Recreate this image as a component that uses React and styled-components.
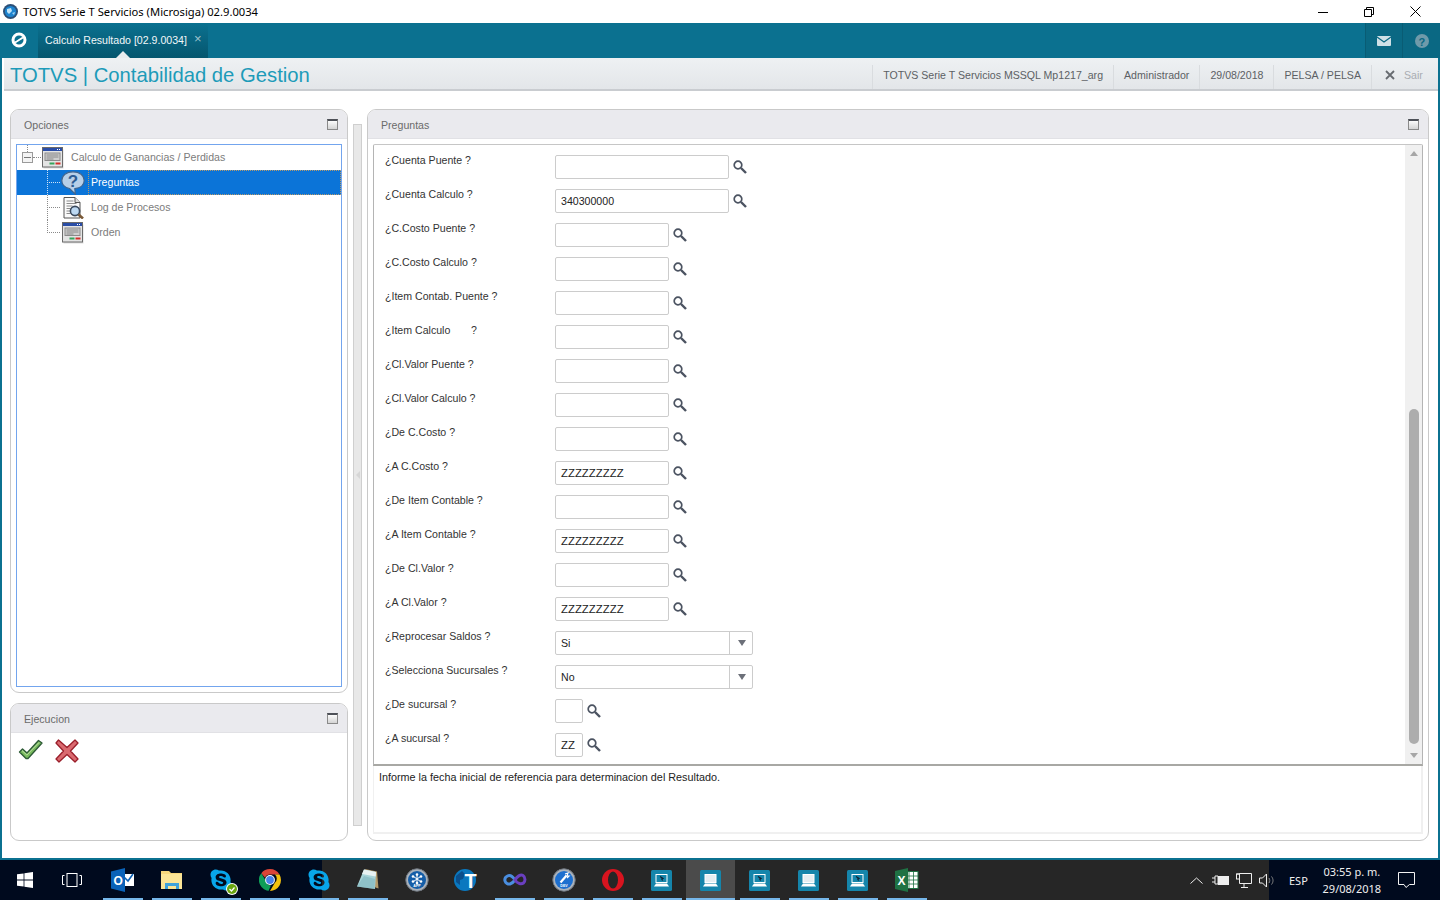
import React from "react";
import styled, { createGlobalStyle } from "styled-components";
import { FaSkype } from "react-icons/fa";

const GlobalStyle = createGlobalStyle`
  html, body {
    margin: 0;
    padding: 0;
    height: 100%;
    background: #fff;
    overflow: hidden;
  }
  * { box-sizing: border-box; }
`;

const Page = styled.div`
  width: 1440px;
  height: 900px;
  display: flex;
  flex-direction: column;
  font-family: "Liberation Sans", Arial, sans-serif;
`;

const TitleBar = styled.div`
  height: 23px;
  display: flex;
  align-items: center;
  background: #fff;
  padding: 0 2px 0 3px;
  flex: none;
`;

const TitleText = styled.span`
  font-family: "Noto Sans", sans-serif;
  font-size: 11.2px;
  color: #000;
  margin-left: 5px;
  flex: 1;
`;

const WindowButton = styled.div`
  width: 46px;
  height: 23px;
  display: flex;
  align-items: center;
  justify-content: center;
`;

const TealBar = styled.div`
  height: 35px;
  flex: none;
  display: flex;
  background: #0b7190;
`;

const LogoSlot = styled.div`
  width: 38px;
  display: flex;
  align-items: center;
  justify-content: center;
  padding-bottom: 1px;
`;

const Tab = styled.div`
  position: relative;
  width: 170px;
  display: flex;
  align-items: center;
  padding: 0 0 1px 7px;
  color: #f2f7f9;
  font-size: 10.6px;
  background: linear-gradient(#0b7190, #05566e);
  &::after {
    content: "";
    position: absolute;
    left: 78px;
    bottom: 0;
    border-left: 7px solid transparent;
    border-right: 7px solid transparent;
    border-bottom: 7px solid #e9ecee;
  }
`;

const TabClose = styled.span`
  margin-left: 7px;
  color: #9fc3cf;
  font-size: 13px;
  line-height: 10px;
  padding-bottom: 2px;
`;

const BarSpacer = styled.div`
  flex: 1;
`;

const BarSlot = styled.div`
  width: ${(p) => p.$w}px;
  display: flex;
  align-items: center;
  justify-content: center;
  background: #0a6883;
  border-left: 1px solid #095c74;
`;

const AppFrame = styled.div`
  flex: 1;
  display: flex;
  flex-direction: column;
  border-left: 2px solid #0b7190;
  border-right: 2px solid #0b7190;
  border-bottom: 2px solid #0b7190;
  min-height: 0;
`;

const HeaderBar = styled.div`
  height: 33px;
  flex: none;
  margin-left: 2px;
  display: flex;
  align-items: flex-end;
  background: linear-gradient(#eef1f3, #e3e6e9);
  border-bottom: 2px solid #c9ccd0;
`;

const AppTitle = styled.div`
  flex: 1;
  align-self: center;
  padding: 4px 0 0 6px;
  font-size: 20.25px;
  color: #1d9bb9;
  white-space: pre;
`;

const HeaderItem = styled.div`
  height: 24px;
  padding: 0 10px 4px;
  display: flex;
  align-items: center;
  font-size: 10.6px;
  color: #5c5f64;
  border-left: 1px solid #d9dcdf;
  white-space: nowrap;
`;

const ExitItem = styled(HeaderItem)`
  width: 67px;
  gap: 9px;
  padding: 0 0 4px 13px;
  color: #a9adb2;
`;

const Content = styled.div`
  flex: 1;
  min-height: 0;
  display: flex;
  padding: 18px 9px 17px 8px;
  background: #fff;
`;

const LeftColumn = styled.div`
  width: 338px;
  flex: none;
  display: flex;
  flex-direction: column;
  gap: 10px;
`;

const Splitter = styled.div`
  width: 9px;
  margin: 15px 5px;
  flex: none;
  background: #e8e8e8;
  border: 1px solid #cfcfcf;
  display: flex;
  align-items: center;
  justify-content: center;
  &::before {
    content: "";
    border-top: 4px solid transparent;
    border-bottom: 4px solid transparent;
    border-right: 4px solid #d6d6d6;
  }
`;

const Panel = styled.section`
  display: flex;
  flex-direction: column;
  border: 1px solid #c9c9c9;
  border-radius: 9px;
  overflow: hidden;
  background: #fff;
  min-height: 0;
  flex: ${(p) => (p.$h ? `0 0 ${p.$h}px` : 1)};
`;

const PanelHeader = styled.header`
  height: 29px;
  flex: none;
  display: flex;
  align-items: center;
  justify-content: space-between;
  padding: 1px 9px 0 13px;
  background: #eaeaee;
  border-bottom: 1px solid #e1e1e5;
  color: #6b6b6b;
  font-size: 10.6px;
`;

const MinimizeBox = styled.div`
  width: 11px;
  height: 11px;
  border: 1px solid #8a8a8a;
  border-top: 2px solid #4d5057;
  background: linear-gradient(#fbfbfb, #d4d4d4);
`;

const TreeBox = styled.div`
  flex: 1;
  margin: 5px;
  border: 1px solid #73a5ee;
  background: #fff;
  min-height: 0;
`;

const TreeRow = styled.div`
  position: relative;
  height: 25px;
  display: flex;
  align-items: center;
  padding-left: ${(p) => (p.$root ? 25 : 45)}px;
  background: ${(p) => (p.$selected ? "#0b74d8" : "transparent")};
  &::before {
    content: "";
    position: absolute;
    left: ${(p) => (p.$root ? 10 : 30)}px;
    top: 0;
    height: ${(p) => (p.$root ? 7 : p.$last ? 13 : 25)}px;
    border-left: 1px dotted ${(p) => (p.$selected ? "#cfe3f8" : "#8a8a8a")};
  }
  &::after {
    content: "";
    display: ${(p) => (p.$root ? "none" : "block")};
    position: absolute;
    left: 30px;
    top: 12px;
    width: 13px;
    border-top: 1px dotted ${(p) => (p.$selected ? "#cfe3f8" : "#8a8a8a")};
  }
`;

const Expander = styled.div`
  position: absolute;
  left: 5px;
  top: 7px;
  width: 11px;
  height: 11px;
  border: 1px solid #9a9a9a;
  background: #f4f4f4;
  &::before {
    content: "";
    position: absolute;
    left: 1px;
    top: 4px;
    width: 7px;
    height: 1px;
    background: #777;
  }
  &::after {
    content: "";
    position: absolute;
    left: 10px;
    top: 4px;
    width: 8px;
    border-top: 1px dotted #8a8a8a;
  }
`;

const TreeIcon = styled.span`
  width: 22px;
  height: 22px;
  display: flex;
  flex: none;
  align-items: center;
  justify-content: center;
  overflow: visible;
  & > svg {
    flex: none;
  }
`;

const TreeLabel = styled.span`
  margin-left: 4px;
  padding: ${(p) => (p.$selected ? "0 0 2px 2px" : "0 0 2px 3px")};
  height: ${(p) => (p.$selected ? "25px" : "auto")};
  flex: ${(p) => (p.$selected ? 1 : "none")};
  display: flex;
  align-items: center;
  font-size: 10.6px;
  color: ${(p) => (p.$selected ? "#fff" : "#7c7c7c")};
  ${(p) => (p.$selected ? "border: 1px dotted #b89a6a;" : "")}
`;

const ActionRow = styled.div`
  display: flex;
  align-items: flex-start;
  gap: 12px;
  padding: 6px 7px;
`;

const Questions = styled.div`
  flex: 1;
  margin: 5px 5px 6px;
  display: flex;
  flex-direction: column;
  min-height: 0;
`;

const ScrollArea = styled.div`
  height: 622px;
  flex: none;
  display: flex;
  border: 1px solid #b4b4b4;
  border-bottom: 2px solid #a8a8a4;
  border-radius: 2px 2px 0 0;
  border-top-color: #c6c6c6;
  background: #fff;
`;

const FormList = styled.div`
  flex: 1;
  padding: 10px 0 0 11px;
`;

const FormRow = styled.div`
  height: 34px;
  display: grid;
  grid-template-columns: 170px auto;
  justify-content: start;
`;

const FormLabel = styled.label`
  font-size: 10.6px;
  line-height: 12px;
  margin-top: -1px;
  color: #333;
  white-space: pre;
`;

const FieldGroup = styled.div`
  display: flex;
  align-items: flex-start;
  gap: 4px;
`;

const Field = styled.div`
  width: ${(p) => p.$w}px;
  height: 24px;
  padding: 0 0 0 5px;
  border: 1px solid #cccccc;
  border-radius: 2px;
  background: #fff;
  display: flex;
  align-items: center;
  font-size: ${(p) => (p.$big ? 11.4 : 10.6)}px;
  color: #222;
`;

const SearchButton = styled.span`
  display: flex;
  margin-top: 5px;
`;

const SelectBox = styled.div`
  width: 198px;
  height: 24px;
  display: grid;
  grid-template-columns: 1fr 23px;
  border: 1px solid #cccccc;
  border-radius: 2px;
  font-size: 10.6px;
  color: #222;
`;

const SelectValue = styled.div`
  display: flex;
  align-items: center;
  padding: 0 0 0 5px;
`;

const SelectArrow = styled.div`
  border-left: 1px solid #cccccc;
  padding-left: 2px;
  display: flex;
  align-items: center;
  justify-content: center;
  &::before {
    content: "";
    border-left: 4px solid transparent;
    border-right: 4px solid transparent;
    border-top: 6px solid #6c7079;
  }
`;

const ScrollTrack = styled.div`
  width: 17px;
  flex: none;
  background: #f0f0f0;
  display: flex;
  flex-direction: column;
  align-items: center;
`;

const ScrollArrow = styled.div`
  height: 17px;
  flex: none;
  display: flex;
  align-items: center;
  justify-content: center;
  &::before {
    content: "";
    border-left: 4px solid transparent;
    border-right: 4px solid transparent;
    ${(p) => (p.$down ? "border-top" : "border-bottom")}: 5px solid #a6a6a6;
  }
`;

const ScrollSpace = styled.div`
  flex: 1;
  width: 10px;
  display: flex;
  flex-direction: column;
  justify-content: flex-end;
  padding-bottom: 3px;
`;

const ScrollThumb = styled.div`
  height: 335px;
  background: #adadad;
  border-radius: 5px;
`;

const HelpBox = styled.div`
  flex: 1;
  padding: 5px;
  border: 1px solid #f0f0f0;
  border-width: 0 2px 2px 1px;
  font-size: 10.8px;
  line-height: 12px;
  color: #222;
`;

const Taskbar = styled.footer`
  height: 40px;
  flex: none;
  display: flex;
  align-items: stretch;
  background: linear-gradient(
    to right,
    #000a1e 322px,
    #262626 322px,
    #262626 1269px,
    #000a1e 1269px
  );
`;

const TaskSlot = styled.div`
  position: relative;
  width: 49px;
  flex: none;
  display: flex;
  align-items: center;
  justify-content: center;
  background: ${(p) => (p.$active ? "#4b4b4b" : "transparent")};
  &::after {
    content: "";
    display: ${(p) => (p.$open ? "block" : "none")};
    position: absolute;
    bottom: 0;
    left: ${(p) => (p.$active ? 0 : 5)}px;
    right: ${(p) => (p.$active ? 0 : 4)}px;
    height: 2px;
    background: #76b7ea;
  }
`;

const Tray = styled.div`
  flex: 1;
  display: flex;
  align-items: center;
  color: #f0f0f0;
  font-family: "Noto Sans", sans-serif;
  font-size: 11px;
  padding-left: 257px;
`;

const TrayIcon = styled.span`
  display: flex;
  width: ${(p) => p.$w}px;
  justify-content: center;
`;

const TrayLang = styled.span`
  margin-left: 7px;
`;

const Clock = styled.div`
  width: 60px;
  margin-left: 14px;
  line-height: 17px;
  text-align: center;
`;

const Svg = ({ w = 22, h = 22, box, children }) => (
  <svg width={w} height={h} viewBox={box || `0 0 ${w} ${h}`} fill="none">
    {children}
  </svg>
);

const AppGlobe = () => (
  <Svg w={15} h={15}>
    <circle cx="7.5" cy="7.5" r="7.5" fill="#2b4f77" />
    <circle cx="7.5" cy="7.5" r="5.6" fill="#1c83cf" />
    <path d="M4 5l4-1 1 3-3 3-2-2z" fill="#bfe3f7" />
    <path d="M9 9l3-1-1 3z" fill="#9fd3f2" />
  </Svg>
);

const TotvsLogo = () => (
  <Svg w={16} h={16}>
    <circle cx="8" cy="8" r="6" stroke="#fff" strokeWidth="3" />
    <path d="M4 10.5L12 5.5" stroke="#fff" strokeWidth="2" />
    <path d="M4.5 8.5L9 5.2M7 11l4.5-3.2" stroke="#0b7190" strokeWidth=".9" />
  </Svg>
);

const WindowIcon = () => (
  <Svg>
    <rect x="1.5" y="2.5" width="20" height="19" fill="#9a9a9a" opacity=".35" />
    <rect x=".5" y=".5" width="20" height="19.5" fill="#e4e4e4" stroke="#6a6a6a" />
    <rect x="1" y="1" width="19" height="3" fill="#2a4da6" />
    <path d="M15 2.5h1M17 2.5h1" stroke="#fff" />
    <rect x="3" y="6" width="15" height="7.5" fill="#cfcfcf" stroke="#8a8a8a" />
    <path d="M4.5 8h12M4.5 10h12M4.5 12h7" stroke="#8a8a8a" />
    <rect x="7.5" y="15.5" width="5" height="2" fill="#36a45c" />
    <rect x="13.5" y="15.5" width="5" height="2" fill="#d22f2a" />
  </Svg>
);

const QuestionIcon = () => (
  <Svg w={24} h={24}>
    <path
      d="M12 .8C5.4.8.8 4.2.8 9.5c0 4.3 3.4 7.3 7.8 8l5.8 5.7-.6-5.5C19.2 17 23.2 14 23.2 9.5 23.2 4.2 18.6.8 12 .8z"
      fill="#b7cfe8"
      stroke="#3f648e"
      strokeWidth="1.2"
    />
    <text x="6.7" y="15.5" fontFamily="Liberation Sans" fontWeight="700" fontSize="17" fill="#2d5c92">
      ?
    </text>
  </Svg>
);

const LogIcon = () => (
  <Svg>
    <path d="M2 .5h11l5 5V21H2z" fill="#fafafa" stroke="#555" />
    <path d="M13 .5v5h5" fill="#ddd" stroke="#555" />
    <path d="M4.5 4h7M4.5 6.5h10M4.5 9h6M4.5 11.5h4M4.5 14h4M4.5 16.5h4" stroke="#8a8a8a" />
    <circle cx="13" cy="14" r="4.6" fill="#bcd8f2" stroke="#39485c" strokeWidth="1.6" />
    <path d="M16.5 17.5l4.5 4" stroke="#7a5a38" strokeWidth="2.6" />
  </Svg>
);

const SearchIcon = () => (
  <Svg w={14} h={14}>
    <circle cx="5" cy="5" r="3.8" stroke="#4b5361" strokeWidth="1.7" fill="#fff" />
    <path d="M8 8l5 5" stroke="#4b5361" strokeWidth="2.4" />
  </Svg>
);

const CheckIcon = () => (
  <Svg w={25} h={21}>
    <path
      d="M1.5 13l3-3 4.5 4L20.5 1.5l3.5 2.5L10 19.5H8z"
      fill="#79bb5e"
      stroke="#2f5c38"
      strokeWidth="1.4"
      strokeLinejoin="round"
    />
    <path d="M4 11.5l4.8 4.5L21 3.5" stroke="#bfe0a8" strokeWidth="1" />
  </Svg>
);

const CrossIcon = () => (
  <Svg w={24} h={24}>
    <path
      d="M3.5 1l8.5 7.5L20 1l3 3-7.5 8L23 20l-3 3-8-7.5L4 23l-3-3 7.5-8L1 4z"
      fill="#da6a70"
      stroke="#9a1e2a"
      strokeWidth="1.3"
      strokeLinejoin="round"
    />
  </Svg>
);

const WinLogo = () => (
  <Svg w={16} h={16}>
    <path d="M0 2.3l6.6-.9v6.2H0zM7.4 1.3L16 0v7.6H7.4zM0 8.4h6.6v6.2L0 13.7zM7.4 8.4H16V16l-8.6-1.3z" fill="#fff" />
  </Svg>
);

const TaskView = () => (
  <span style={{ display: "flex", marginRight: 3 }}>
    <Svg w={20} h={14}>
      <rect x="5" y=".5" width="10" height="13" stroke="#fff" />
      <path d="M2.5 2.5H.5v9h2M17.5 2.5h2v9h-2" stroke="#fff" />
    </Svg>
  </span>
);

const Outlook = () => (
  <Svg w={24} h={24}>
    <rect x="11" y="6" width="12" height="12" fill="#fff" />
    <path d="M13 9l4 4 5-7" stroke="#0a5fb4" strokeWidth="1.6" />
    <path d="M0 3.5L14 0v24L0 20.5z" fill="#0a62b8" />
    <text x="2.5" y="16.5" fontFamily="Liberation Sans" fontWeight="700" fontSize="12" fill="#fff">
      O
    </text>
  </Svg>
);

const Folder = () => (
  <Svg w={22} h={20}>
    <path d="M0 1h8l2 2h11v16H0z" fill="#f6d77c" />
    <rect x="0" y="4" width="21" height="15" fill="#fbe597" />
    <path d="M4 19v-6h14v6h-3v-3H7v3z" fill="#3fa3dc" />
  </Svg>
);

const SkypeIcon = ({ badge }) => (
  <span style={{ position: "relative", display: "flex" }}>
    <FaSkype size={24} color="#08a6ea" />
    {badge && (
      <svg width="12" height="12" viewBox="0 0 12 12" style={{ position: "absolute", right: -5, bottom: -3 }}>
        <circle cx="6" cy="6" r="6" fill="#fff" />
        <circle cx="6" cy="6" r="5" fill="#6ba510" />
        <path d="M3.5 6l2 2 3-3.5" stroke="#fff" strokeWidth="1.2" fill="none" />
      </svg>
    )}
  </span>
);

const Chrome = () => (
  <Svg w={22} h={22}>
    <path d="M11 0a11 11 0 019.5 5.5H11a5.5 5.5 0 00-5 3.2L2.3 4.2A11 11 0 0111 0z" fill="#db4437" />
    <path d="M20.5 5.5A11 11 0 0111 22l4.7-8a5.5 5.5 0 00.2-8.5z" fill="#f4c20d" />
    <path d="M11 22A11 11 0 012.3 4.2L6.9 12a5.5 5.5 0 005 4.4L9.5 22z" fill="#0f9d58" />
    <circle cx="11" cy="11" r="4.9" fill="#fff" />
    <circle cx="11" cy="11" r="3.9" fill="#4a83ec" />
  </Svg>
);

const Notes = () => (
  <Svg w={24} h={24}>
    <path d="M9 1l12 2.5 1.5 17-3-1z" fill="#b49a6a" />
    <path d="M8 1.5l12 2.5-1 17L1 18.5z" fill="#a8d4d8" />
    <path d="M8 1.5l12 2.5-.3 4.5L6 6z" fill="#e8f2f2" />
    <path d="M1 18.5L8 8l11 3-.5 10z" fill="#7fb6bf" opacity=".6" />
  </Svg>
);

const BadgeRing = ({ children, fill = "#155ea8", label }) => (
  <Svg w={24} h={24}>
    <circle cx="12" cy="12" r="11.2" fill="#aab2bb" stroke="#70777f" />
    <circle cx="12" cy="12" r="9" fill={fill} />
    {children}
    <text x="12" y="19.3" textAnchor="middle" fontFamily="Liberation Sans" fontWeight="700" fontSize="3.6" fill="#fff">
      {label}
    </text>
  </Svg>
);

const SnowBadge = () => (
  <BadgeRing label="APP">
    <path d="M12 7v8M8.5 8.5l7 5M15.5 8.5l-7 5" stroke="#fff" strokeWidth="1" />
    <circle cx="12" cy="6.5" r="1.3" fill="#fff" />
    <circle cx="8" cy="8.5" r="1.3" fill="#fff" />
    <circle cx="16" cy="8.5" r="1.3" fill="#fff" />
    <circle cx="8" cy="13.5" r="1.3" fill="#fff" />
    <circle cx="16" cy="13.5" r="1.3" fill="#fff" />
    <circle cx="12" cy="15" r="1.3" fill="#fff" />
  </BadgeRing>
);

const DevBadge = () => (
  <BadgeRing fill="#1d6fcf" label="DEV">
    <path d="M8.5 14.5l6-7" stroke="#fff" strokeWidth="2.2" />
    <path d="M13 6l3-1-1 3 2 0-2 2" stroke="#fff" strokeWidth="1.2" />
  </BadgeRing>
);

const TGlobe = () => (
  <Svg w={24} h={24}>
    <circle cx="11" cy="12" r="11" fill="#0a78bf" />
    <path d="M2 8l6-5 3 3-2 5-3 1v5l-4-3z" fill="#0b4f8c" />
    <text x="10.5" y="19.5" fontFamily="Liberation Sans" fontWeight="700" fontSize="20" fill="#fff">
      T
    </text>
  </Svg>
);

const InfinityMark = () => (
  <Svg w={24} h={14}>
    <path d="M12 7C9 2.5 6.5 2 4.5 3S1.5 6 2 8s3 3.5 5 3 3.5-2 5-4z" stroke="#4a8ee0" strokeWidth="3" />
    <path d="M12 7c2-3.5 5.5-6 8-4.5s2.5 6 .5 7.5-6 1-8.5-3z" stroke="#6a3fc0" strokeWidth="3" />
  </Svg>
);

const Opera = () => (
  <Svg w={24} h={24}>
    <circle cx="12" cy="12" r="11" fill="#d8141f" />
    <ellipse cx="12" cy="12" rx="5" ry="8.6" fill="#262626" />
  </Svg>
);

const Laptop = ({ light }) => (
  <Svg w={21} h={21}>
    <rect width="21" height="21" rx="1.5" fill="#1585ab" />
    <rect x="5" y="4.5" width="11" height="8" fill={light ? "#e6eef2" : "#1585ab"} stroke="#fff" />
    {!light && <path d="M9 6.5l3 2-1.2.5.8 1.5" stroke="#123" strokeWidth="1.2" />}
    <path d="M3 16.5l2-3h11l2 3z" fill="#fff" />
  </Svg>
);

const Excel = () => (
  <Svg w={24} h={24}>
    <rect x="10" y="3.5" width="13" height="17" fill="#fff" stroke="#1f7244" />
    <path d="M14 3.5v17M18.5 3.5v17M10 8h13M10 12h13M10 16h13" stroke="#1f7244" strokeWidth=".8" />
    <path d="M0 3L13 0v24L0 21z" fill="#1f7244" />
    <text x="2.5" y="16.5" fontFamily="Liberation Sans" fontWeight="700" fontSize="12" fill="#fff">
      X
    </text>
  </Svg>
);

const questions = [
  { label: "¿Cuenta Puente ?", w: 174 },
  { label: "¿Cuenta Calculo ?", w: 174, value: "340300000" },
  { label: "¿C.Costo Puente ?", w: 114 },
  { label: "¿C.Costo Calculo ?", w: 114 },
  { label: "¿Item Contab. Puente ?", w: 114 },
  { label: "¿Item Calculo       ?", w: 114 },
  { label: "¿Cl.Valor Puente ?", w: 114 },
  { label: "¿Cl.Valor Calculo ?", w: 114 },
  { label: "¿De C.Costo ?", w: 114 },
  { label: "¿A C.Costo ?", w: 114, value: "ZZZZZZZZZ", big: true },
  { label: "¿De Item Contable ?", w: 114 },
  { label: "¿A Item Contable ?", w: 114, value: "ZZZZZZZZZ", big: true },
  { label: "¿De Cl.Valor ?", w: 114 },
  { label: "¿A Cl.Valor ?", w: 114, value: "ZZZZZZZZZ", big: true },
  { label: "¿Reprocesar Saldos ?", select: "Si" },
  { label: "¿Selecciona Sucursales ?", select: "No" },
  { label: "¿De sucursal ?", w: 28 },
  { label: "¿A sucursal ?", w: 28, value: "ZZ", big: true },
];

const headerItems = [
  "TOTVS Serie T Servicios MSSQL Mp1217_arg",
  "Administrador",
  "29/08/2018",
  "PELSA / PELSA",
];

const taskItems = [
  { icon: <WinLogo /> },
  { icon: <TaskView /> },
  { icon: <Outlook />, open: true },
  { icon: <Folder />, open: true },
  { icon: <SkypeIcon badge />, open: true },
  { icon: <Chrome />, open: true },
  { icon: <SkypeIcon />, open: true },
  { icon: <Notes />, open: true },
  { icon: <SnowBadge /> },
  { icon: <TGlobe /> },
  { icon: <InfinityMark />, open: true },
  { icon: <DevBadge />, open: true },
  { icon: <Opera />, open: true },
  { icon: <Laptop />, open: true },
  { icon: <Laptop light />, open: true, active: true },
  { icon: <Laptop />, open: true },
  { icon: <Laptop light />, open: true },
  { icon: <Laptop />, open: true },
  { icon: <Excel />, open: true },
];

export default function App() {
  return (
    <Page>
      <GlobalStyle />
      <TitleBar>
        <AppGlobe />
        <TitleText>TOTVS Serie T Servicios (Microsiga) 02.9.0034</TitleText>
        <WindowButton>
          <Svg w={10} h={10}>
            <path d="M0 5.5h10" stroke="#000" />
          </Svg>
        </WindowButton>
        <WindowButton>
          <Svg w={10} h={10}>
            <path d="M.5 2.5h7v7h-7zM2.5 2.5v-2h7v7h-2" stroke="#000" />
          </Svg>
        </WindowButton>
        <WindowButton>
          <Svg w={11} h={11}>
            <path d="M.5.5l10 10M10.5.5l-10 10" stroke="#000" />
          </Svg>
        </WindowButton>
      </TitleBar>
      <TealBar>
        <LogoSlot>
          <TotvsLogo />
        </LogoSlot>
        <Tab>
          Calculo Resultado [02.9.0034]
          <TabClose>×</TabClose>
        </Tab>
        <BarSpacer />
        <BarSlot $w={37}>
          <Svg w={14} h={10}>
            <rect width="14" height="10" rx="1" fill="#cfe0e6" />
            <path d="M0 1l7 5 7-5" stroke="#0a6883" strokeWidth="1.2" />
          </Svg>
        </BarSlot>
        <BarSlot $w={38}>
          <Svg w={14} h={14}>
            <circle cx="7" cy="7" r="7" fill="#6f9aaa" />
            <text x="3.6" y="11.5" fontFamily="Liberation Sans" fontWeight="700" fontSize="11" fill="#0a6883">
              ?
            </text>
          </Svg>
        </BarSlot>
      </TealBar>
      <AppFrame>
        <HeaderBar>
          <AppTitle>TOTVS | Contabilidad de Gestion</AppTitle>
          {headerItems.map((item) => (
            <HeaderItem key={item}>{item}</HeaderItem>
          ))}
          <ExitItem>
            <Svg w={10} h={10}>
              <path d="M1 1l8 8M9 1l-8 8" stroke="#676b70" strokeWidth="1.8" />
            </Svg>
            Sair
          </ExitItem>
        </HeaderBar>
        <Content>
          <LeftColumn>
            <Panel>
              <PanelHeader>
                Opciones
                <MinimizeBox />
              </PanelHeader>
              <TreeBox>
                <TreeRow $root>
                  <Expander />
                  <TreeIcon>
                    <WindowIcon />
                  </TreeIcon>
                  <TreeLabel $root>Calculo de Ganancias / Perdidas</TreeLabel>
                </TreeRow>
                <TreeRow $selected>
                  <TreeIcon>
                    <QuestionIcon />
                  </TreeIcon>
                  <TreeLabel $selected>Preguntas</TreeLabel>
                </TreeRow>
                <TreeRow>
                  <TreeIcon>
                    <LogIcon />
                  </TreeIcon>
                  <TreeLabel>Log de Procesos</TreeLabel>
                </TreeRow>
                <TreeRow $last>
                  <TreeIcon>
                    <WindowIcon />
                  </TreeIcon>
                  <TreeLabel>Orden</TreeLabel>
                </TreeRow>
              </TreeBox>
            </Panel>
            <Panel $h={138}>
              <PanelHeader>
                Ejecucion
                <MinimizeBox />
              </PanelHeader>
              <ActionRow>
                <CheckIcon />
                <CrossIcon />
              </ActionRow>
            </Panel>
          </LeftColumn>
          <Splitter />
          <Panel>
            <PanelHeader>
              Preguntas
              <MinimizeBox />
            </PanelHeader>
            <Questions>
              <ScrollArea>
                <FormList>
                  {questions.map((q) => (
                    <FormRow key={q.label}>
                      <FormLabel>{q.label}</FormLabel>
                      {q.select ? (
                        <SelectBox>
                          <SelectValue>{q.select}</SelectValue>
                          <SelectArrow />
                        </SelectBox>
                      ) : (
                        <FieldGroup>
                          <Field $w={q.w} $big={q.big}>
                            {q.value}
                          </Field>
                          <SearchButton>
                            <SearchIcon />
                          </SearchButton>
                        </FieldGroup>
                      )}
                    </FormRow>
                  ))}
                </FormList>
                <ScrollTrack>
                  <ScrollArrow />
                  <ScrollSpace>
                    <ScrollThumb />
                  </ScrollSpace>
                  <ScrollArrow $down />
                </ScrollTrack>
              </ScrollArea>
              <HelpBox>Informe la fecha inicial de referencia para determinacion del Resultado.</HelpBox>
            </Questions>
          </Panel>
        </Content>
      </AppFrame>
      <Taskbar>
        {taskItems.map((t, i) => (
          <TaskSlot key={i} $open={t.open} $active={t.active}>
            {t.icon}
          </TaskSlot>
        ))}
        <Tray>
          <TrayIcon $w={16}>
            <Svg w={13} h={7}>
              <path d="M.5 6.5l6-5.500 6 5.500" stroke="#eee" />
            </Svg>
          </TrayIcon>
          <TrayIcon $w={32}>
            <Svg w={17} h={12}>
              <path d="M0 4h3M0 8h3M3 2h3v8H3z" stroke="#eee" />
              <rect x="6.5" y="2.5" width="10" height="8" fill="#eee" stroke="#eee" />
            </Svg>
          </TrayIcon>
          <TrayIcon $w={16}>
            <Svg w={16} h={15}>
              <path d="M.5 1h3M3.500.5h12v10h-12zM8 11v3M5 14.500h7" stroke="#eee" />
              <rect x=".5" y="1" width="3" height="5" stroke="#eee" />
            </Svg>
          </TrayIcon>
          <TrayIcon $w={30}>
            <Svg w={17} h={15}>
              <path d="M.5 5h3l4-4v13l-4-4h-3z" stroke="#eee" />
              <path d="M10 5c1 1.500 1 3.500 0 5M12.500 3.500c2 2.500 2 5.500 0 8" stroke="#8a8a8a" />
            </Svg>
          </TrayIcon>
          <TrayLang>ESP</TrayLang>
          <Clock>
            03:55 p. m.
            <br />
            29/08/2018
          </Clock>
          <TrayIcon $w={50}>
            <Svg w={17} h={16}>
              <path d="M.5.5h16v12h-5L8 15.500 6 12.500H.5z" stroke="#f2f2f2" />
            </Svg>
          </TrayIcon>
        </Tray>
      </Taskbar>
    </Page>
  );
}
